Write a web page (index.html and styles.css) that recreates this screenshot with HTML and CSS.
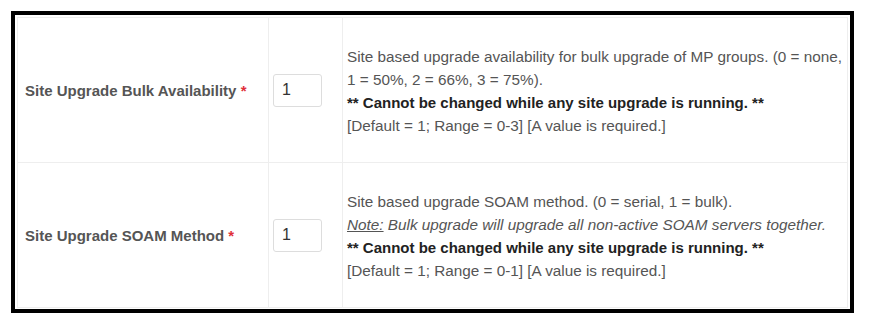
FILE: index.html
```html
<!DOCTYPE html>
<html lang="en">
<head>
    <meta charset="UTF-8">
    <meta name="viewport" content="width=device-width, initial-scale=1.0">
    <title>Site Upgrade Options</title>
    <link rel="stylesheet" href="styles.css">
</head>
<body>
<div class="frame">
	<table class="opts">
		<tr>
			<td class="lbl">Site Upgrade Bulk Availability <span class="req">*</span></td>
			<td class="val"><input type="text" value="1"></td>
			<td class="desc">
				Site based upgrade availability for bulk upgrade of MP groups. (0 = none,<br>
				1 = 50%, 2 = 66%, 3 = 75%).<br>
				<b>** Cannot be changed while any site upgrade is running. **</b><br>
				[Default = 1; Range = 0-3] [A value is required.]
			</td>
		</tr>
		<tr>
			<td class="lbl">Site Upgrade SOAM Method <span class="req">*</span></td>
			<td class="val"><input type="text" value="1"></td>
			<td class="desc">
				Site based upgrade SOAM method. (0 = serial, 1 = bulk).<br>
				<i><u>Note:</u> Bulk upgrade will upgrade all non-active SOAM servers together.</i><br>
				<b>** Cannot be changed while any site upgrade is running. **</b><br>
				[Default = 1; Range = 0-1] [A value is required.]
			</td>
		</tr>
	</table>
</div>
</body>
</html>
```

FILE: styles.css
```css
*{margin: 0;padding: 0;box-sizing: border-box;}
body{background: #ffffff;font-family: "Liberation Sans", Arial, sans-serif;}
.frame{width: 843px;height: 302px;margin: 11px 0 0 11px;border: 4px solid #000000;padding: 2px;}
.opts{width: 831px;height: 290px;table-layout: fixed;border-collapse: collapse;border: 1px solid #eeeeee;}
.opts td{border: 1px solid #eeeeee;vertical-align: middle;}
.opts tr{height: 145px;}
.lbl{width: 251px;padding-left: 7px;font-size: 15px;font-weight: bold;color: #555555;white-space: nowrap;}
.req{color: #e0303a;}
.val{width: 74px;padding-left: 4px;}
.val input{width: 49px;height: 33px;border: 1px solid #dddddd;border-radius: 3px;padding-left: 8px;font-family: "Liberation Sans", Arial, sans-serif;font-size: 16px;color: #333333;}
.desc{padding: 2px 0 0 4px;font-size: 15.3px;line-height: 23px;color: #555555;white-space: nowrap;overflow: hidden;}
.desc b{font-size: 15px;color: #222222;}
```
